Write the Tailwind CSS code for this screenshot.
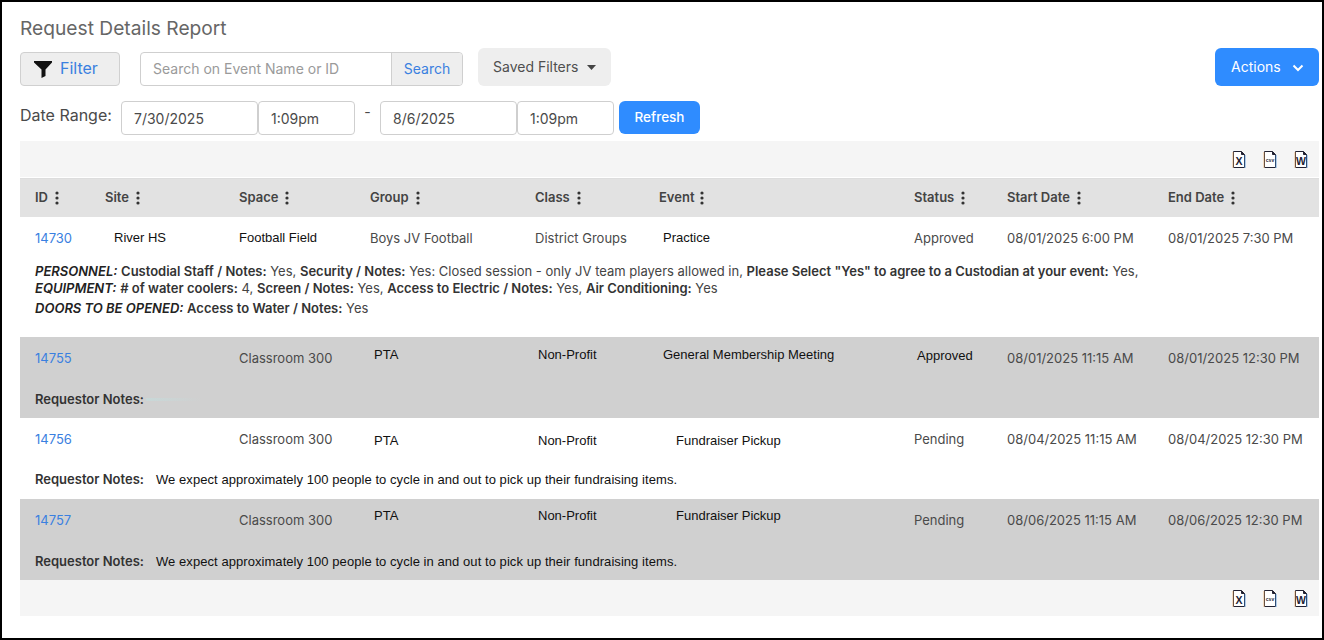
<!DOCTYPE html>
<html lang="en">
<head>
<meta charset="UTF-8" />
<title>Request Details Report</title>
<script src="https://cdn.jsdelivr.net/npm/@tailwindcss/browser@4"></script>
</head>
<body class="bg-white">
<div class="w-[1324px] h-[640px] border-2 border-black overflow-hidden bg-white font-['Inter',sans-serif] text-[13px] text-[#4a4a4a]">
  <div class="pl-[18px] pr-[3px]">
    <!-- Title -->
    <h1 class="pt-[14px] h-[46px] text-[19.2px] leading-[24px] text-[#666666]">Request Details Report</h1>

    <!-- Filter row -->
    <div class="flex items-start h-[53px]">
      <button class="mt-[4px] w-[100px] h-[34px] flex items-center pl-[13px] pb-[2px] bg-[#eeeeee] border border-[#d0d0d0] rounded text-[16px] text-[#3a80e0]">
        <svg class="w-[18px] h-[17px] mr-[8px] mt-[2px]" viewBox="0 0 18 17"><path d="M0 0h18v1.500L11.500 8.500V15L7.500 17V8.500L0 1.500z" fill="#111"/></svg>
        Filter
      </button>
      <div class="ml-[20px] mt-[4px] w-[323px] h-[34px] flex border border-[#cfcfcf] rounded">
        <div class="flex-1 pl-[12px] pb-[1px] flex items-center text-[14px] text-[#9a9a9a]">Search on Event Name or ID</div>
        <div class="w-[71px] pb-[1px] flex items-center justify-center bg-[#eeeeee] border-l border-[#cfcfcf] rounded-r text-[14px] text-[#3a80e0]">Search</div>
      </div>
      <button class="ml-[15px] w-[133px] h-[38px] flex items-center pl-[15px] pb-[1px] bg-[#eeeeee] rounded-md text-[14px] text-[#4f4f4f]">
        Saved Filters
        <svg class="w-[9px] h-[5px] ml-[9px] mt-[2px]" viewBox="0 0 9 5"><path d="M0 0h9L4.500 5z" fill="#444"/></svg>
      </button>
      <button class="ml-auto w-[104px] h-[38px] flex items-center pl-[16px] pb-[1px] bg-[#2f8cff] rounded-md text-[14px] text-white">
        Actions
        <svg class="w-[12px] h-[8px] ml-[11px] mt-[2px]" viewBox="0 0 12 8"><path d="M1.500 1.500 6 6l4.500-4.500" fill="none" stroke="#fff" stroke-width="2"/></svg>
      </button>
    </div>

    <!-- Date row -->
    <div class="flex items-start h-[40px] text-[14px]">
      <span class="mt-[3px] w-[101px] text-[16px] leading-[22px] text-[#4a4a4a]">Date Range:</span>
      <div class="w-[137px] h-[34px] flex items-center pl-[12px] border border-[#cfcfcf] rounded">7/30/2025</div>
      <div class="w-[97px] h-[34px] flex items-center pl-[12px] border border-[#cfcfcf] rounded">1:09pm</div>
      <span class="w-[25px] text-center leading-[20px] mt-[1px]">-</span>
      <div class="w-[137px] h-[34px] flex items-center pl-[12px] border border-[#cfcfcf] rounded">8/6/2025</div>
      <div class="w-[97px] h-[34px] flex items-center pl-[12px] border border-[#cfcfcf] rounded">1:09pm</div>
      <button class="ml-[5px] w-[81px] h-[33px] bg-[#2f8cff] rounded-md text-[13.5px] font-medium text-white">Refresh</button>
    </div>

    <!-- Export bar -->
    <div class="h-[36px] bg-[#f5f5f5] flex items-center justify-end gap-[15px] pr-[10px]">
      <svg class="w-[16px] h-[17px]" viewBox="0 0 16 17"><path d="M2.500 .5h8l3 3v13h-11z" fill="#fff" stroke="#223" /><path d="M10.500 .5v3h3" fill="#223" stroke="#223"/><path d="M2 1v16" stroke="#e8a860" stroke-width=".7"/><path d="M14 4v13" stroke="#4a90d8" stroke-width=".8"/><text x="8" y="14" text-anchor="middle" font-family="Liberation Sans" font-size="10.500" font-weight="700" fill="#223">X</text></svg>
      <svg class="w-[16px] h-[17px]" viewBox="0 0 16 17"><path d="M2.500 .5h8l3 3v13h-11z" fill="#fff" stroke="#223" /><path d="M10.500 .5v3h3" fill="#223" stroke="#223"/><path d="M2 1v16" stroke="#e8a860" stroke-width=".7"/><path d="M14 4v13" stroke="#4a90d8" stroke-width=".8"/><text x="8" y="11" text-anchor="middle" font-family="Liberation Sans" font-size="5" font-weight="700" fill="#223">csv</text></svg>
      <svg class="w-[16px] h-[17px]" viewBox="0 0 16 17"><path d="M2.500 .5h8l3 3v13h-11z" fill="#fff" stroke="#223" /><path d="M10.500 .5v3h3" fill="#223" stroke="#223"/><path d="M2 1v16" stroke="#e8a860" stroke-width=".7"/><path d="M14 4v13" stroke="#4a90d8" stroke-width=".8"/><text x="8" y="14" text-anchor="middle" font-family="Liberation Sans" font-size="10.500" font-weight="700" fill="#223">W</text></svg>
    </div>

    <!-- Table header -->
    <div class="h-[39px] mt-[1px] bg-[#e2e2e2] border-t border-[#dddddd] pl-[15px] grid grid-cols-[70px_134px_131px_165px_124px_255px_93px_161px_1fr] items-center font-semibold text-[#444444]">
      <div class="flex items-center gap-[7px]">ID <svg class="w-[4px] h-[14px]" viewBox="0 0 4 14"><circle cx="2" cy="2" r="1.600" fill="#333"/><circle cx="2" cy="7" r="1.600" fill="#333"/><circle cx="2" cy="12" r="1.600" fill="#333"/></svg></div>
      <div class="flex items-center gap-[7px]">Site <svg class="w-[4px] h-[14px]" viewBox="0 0 4 14"><circle cx="2" cy="2" r="1.600" fill="#333"/><circle cx="2" cy="7" r="1.600" fill="#333"/><circle cx="2" cy="12" r="1.600" fill="#333"/></svg></div>
      <div class="flex items-center gap-[7px]">Space <svg class="w-[4px] h-[14px]" viewBox="0 0 4 14"><circle cx="2" cy="2" r="1.600" fill="#333"/><circle cx="2" cy="7" r="1.600" fill="#333"/><circle cx="2" cy="12" r="1.600" fill="#333"/></svg></div>
      <div class="flex items-center gap-[7px]">Group <svg class="w-[4px] h-[14px]" viewBox="0 0 4 14"><circle cx="2" cy="2" r="1.600" fill="#333"/><circle cx="2" cy="7" r="1.600" fill="#333"/><circle cx="2" cy="12" r="1.600" fill="#333"/></svg></div>
      <div class="flex items-center gap-[7px]">Class <svg class="w-[4px] h-[14px]" viewBox="0 0 4 14"><circle cx="2" cy="2" r="1.600" fill="#333"/><circle cx="2" cy="7" r="1.600" fill="#333"/><circle cx="2" cy="12" r="1.600" fill="#333"/></svg></div>
      <div class="flex items-center gap-[5px]">Event <svg class="w-[4px] h-[14px]" viewBox="0 0 4 14"><circle cx="2" cy="2" r="1.600" fill="#333"/><circle cx="2" cy="7" r="1.600" fill="#333"/><circle cx="2" cy="12" r="1.600" fill="#333"/></svg></div>
      <div class="flex items-center gap-[7px]">Status <svg class="w-[4px] h-[14px]" viewBox="0 0 4 14"><circle cx="2" cy="2" r="1.600" fill="#333"/><circle cx="2" cy="7" r="1.600" fill="#333"/><circle cx="2" cy="12" r="1.600" fill="#333"/></svg></div>
      <div class="flex items-center gap-[7px]">Start Date <svg class="w-[4px] h-[14px]" viewBox="0 0 4 14"><circle cx="2" cy="2" r="1.600" fill="#333"/><circle cx="2" cy="7" r="1.600" fill="#333"/><circle cx="2" cy="12" r="1.600" fill="#333"/></svg></div>
      <div class="flex items-center gap-[7px]">End Date <svg class="w-[4px] h-[14px]" viewBox="0 0 4 14"><circle cx="2" cy="2" r="1.600" fill="#333"/><circle cx="2" cy="7" r="1.600" fill="#333"/><circle cx="2" cy="12" r="1.600" fill="#333"/></svg></div>
    </div>

    <!-- Row 14730 -->
    <div class="h-[120px] bg-white pl-[15px]">
      <div class="h-[44px] grid grid-cols-[70px_134px_131px_165px_124px_255px_93px_161px_1fr] leading-[20px] pt-[10px]">
        <a class="text-[#3a80e0] pt-[1px]">14730</a>
        <div class="pl-[9px] pt-[1px] font-['Liberation_Sans',sans-serif] text-[#111]">River HS</div>
        <div class="pt-[1px] font-['Liberation_Sans',sans-serif] text-[#111]">Football Field</div>
        <div class="pt-[1px]">Boys JV Football</div>
        <div class="pt-[1px]">District Groups</div>
        <div class="pl-[4px] pt-[1px] font-['Liberation_Sans',sans-serif] text-[#111]">Practice</div>
        <div class="pt-[1px]">Approved</div>
        <div class="pt-[1px]">08/01/2025 6:00 PM</div>
        <div class="pt-[1px]">08/01/2025 7:30 PM</div>
      </div>
      <div class="text-[#444444] leading-[17px] pt-[2px]">
        <p><b class="italic font-semibold text-[#222]">PERSONNEL:</b> <b class="font-semibold text-[#333]">Custodial Staff / Notes:</b> Yes, <b class="font-semibold text-[#333]">Security / Notes:</b> Yes: Closed session - only JV team players allowed in, <b class="font-semibold text-[#333]">Please Select "Yes" to agree to a Custodian at your event:</b> Yes,</p>
        <p><b class="italic font-semibold text-[#222]">EQUIPMENT:</b> <b class="font-semibold text-[#333]"># of water coolers:</b> 4, <b class="font-semibold text-[#333]">Screen / Notes:</b> Yes, <b class="font-semibold text-[#333]">Access to Electric / Notes:</b> Yes, <b class="font-semibold text-[#333]">Air Conditioning:</b> Yes</p>
        <p class="mt-[3px]"><b class="italic font-semibold text-[#222]">DOORS TO BE OPENED:</b> <b class="font-semibold text-[#333]">Access to Water / Notes:</b> Yes</p>
      </div>
    </div>

    <!-- Row 14755 -->
    <div class="h-[81px] bg-[#d0d0d0] pl-[15px]">
      <div class="h-[52px] grid grid-cols-[70px_134px_131px_165px_124px_255px_93px_161px_1fr] leading-[20px]">
        <a class="text-[#3a80e0] pt-[11px]">14755</a>
        <div></div>
        <div class="pt-[11px]">Classroom 300</div>
        <div class="pl-[4px] pt-[8px] font-['Liberation_Sans',sans-serif] text-[#111]">PTA</div>
        <div class="pl-[3px] pt-[8px] font-['Liberation_Sans',sans-serif] text-[#111]">Non-Profit</div>
        <div class="pl-[4px] pt-[8px] font-['Liberation_Sans',sans-serif] text-[#111]">General Membership Meeting</div>
        <div class="pl-[3px] pt-[9px] font-['Liberation_Sans',sans-serif] text-[#111]">Approved</div>
        <div class="pt-[11px]">08/01/2025 11:15 AM</div>
        <div class="pt-[11px]">08/01/2025 12:30 PM</div>
      </div>
      <div class="flex items-center leading-[20px]"><b class="font-semibold text-[#333]">Requestor Notes:</b><span class="ml-[2px] h-[3px] w-[55px] bg-linear-to-r from-[#c8d8d8] to-transparent"></span></div>
    </div>

    <!-- Row 14756 -->
    <div class="h-[81px] bg-white pl-[15px]">
      <div class="h-[51px] grid grid-cols-[70px_134px_131px_165px_124px_255px_93px_161px_1fr] leading-[20px]">
        <a class="text-[#3a80e0] pt-[11px]">14756</a>
        <div></div>
        <div class="pt-[11px]">Classroom 300</div>
        <div class="pl-[4px] pt-[13px] font-['Liberation_Sans',sans-serif] text-[#111]">PTA</div>
        <div class="pl-[3px] pt-[13px] font-['Liberation_Sans',sans-serif] text-[#111]">Non-Profit</div>
        <div class="pl-[17px] pt-[13px] font-['Liberation_Sans',sans-serif] text-[#111]">Fundraiser Pickup</div>
        <div class="pt-[11px]">Pending</div>
        <div class="pt-[11px]">08/04/2025 11:15 AM</div>
        <div class="pt-[11px]">08/04/2025 12:30 PM</div>
      </div>
      <div class="flex leading-[20px]"><b class="font-semibold text-[#333] w-[121px]">Requestor Notes:</b><span class="pt-[1px] font-['Liberation_Sans',sans-serif] tracking-[0.06px] text-[#111]">We expect approximately 100 people to cycle in and out to pick up their fundraising items.</span></div>
    </div>

    <!-- Row 14757 -->
    <div class="h-[81px] bg-[#d0d0d0] pl-[15px]">
      <div class="h-[52px] grid grid-cols-[70px_134px_131px_165px_124px_255px_93px_161px_1fr] leading-[20px]">
        <a class="text-[#3a80e0] pt-[11px]">14757</a>
        <div></div>
        <div class="pt-[11px]">Classroom 300</div>
        <div class="pl-[4px] pt-[7px] font-['Liberation_Sans',sans-serif] text-[#111]">PTA</div>
        <div class="pl-[3px] pt-[7px] font-['Liberation_Sans',sans-serif] text-[#111]">Non-Profit</div>
        <div class="pl-[17px] pt-[7px] font-['Liberation_Sans',sans-serif] text-[#111]">Fundraiser Pickup</div>
        <div class="pt-[11px]">Pending</div>
        <div class="pt-[11px]">08/06/2025 11:15 AM</div>
        <div class="pt-[11px]">08/06/2025 12:30 PM</div>
      </div>
      <div class="flex leading-[20px]"><b class="font-semibold text-[#333] w-[121px]">Requestor Notes:</b><span class="pt-[1px] font-['Liberation_Sans',sans-serif] tracking-[0.06px] text-[#111]">We expect approximately 100 people to cycle in and out to pick up their fundraising items.</span></div>
    </div>

    <!-- Export bar bottom -->
    <div class="h-[36px] bg-[#f5f5f5] flex items-center justify-end gap-[15px] pr-[10px]">
      <svg class="w-[16px] h-[17px]" viewBox="0 0 16 17"><path d="M2.500 .5h8l3 3v13h-11z" fill="#fff" stroke="#223" /><path d="M10.500 .5v3h3" fill="#223" stroke="#223"/><path d="M2 1v16" stroke="#e8a860" stroke-width=".7"/><path d="M14 4v13" stroke="#4a90d8" stroke-width=".8"/><text x="8" y="14" text-anchor="middle" font-family="Liberation Sans" font-size="10.500" font-weight="700" fill="#223">X</text></svg>
      <svg class="w-[16px] h-[17px]" viewBox="0 0 16 17"><path d="M2.500 .5h8l3 3v13h-11z" fill="#fff" stroke="#223" /><path d="M10.500 .5v3h3" fill="#223" stroke="#223"/><path d="M2 1v16" stroke="#e8a860" stroke-width=".7"/><path d="M14 4v13" stroke="#4a90d8" stroke-width=".8"/><text x="8" y="11" text-anchor="middle" font-family="Liberation Sans" font-size="5" font-weight="700" fill="#223">csv</text></svg>
      <svg class="w-[16px] h-[17px]" viewBox="0 0 16 17"><path d="M2.500 .5h8l3 3v13h-11z" fill="#fff" stroke="#223" /><path d="M10.500 .5v3h3" fill="#223" stroke="#223"/><path d="M2 1v16" stroke="#e8a860" stroke-width=".7"/><path d="M14 4v13" stroke="#4a90d8" stroke-width=".8"/><text x="8" y="14" text-anchor="middle" font-family="Liberation Sans" font-size="10.500" font-weight="700" fill="#223">W</text></svg>
    </div>
  </div>
</div>
</body>
</html>
